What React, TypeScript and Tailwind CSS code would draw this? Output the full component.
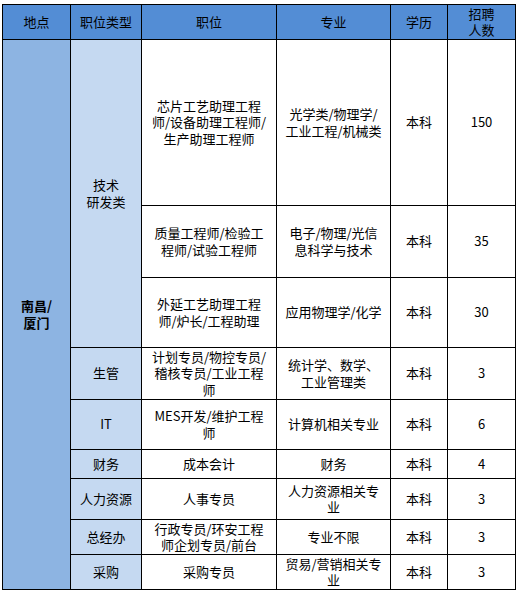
import React from 'react';

const font = { fontFamily: '"Noto Sans CJK SC", "Noto Sans", sans-serif' };

type Row = {
  title: React.ReactNode;
  major: React.ReactNode;
  degree: string;
  count: string;
  h: string;
};

const techRows: Row[] = [
  {
    title: (
      <>
        芯片工艺助理工程
        <br />
        师/设备助理工程师/
        <br />
        生产助理工程师
      </>
    ),
    major: (
      <>
        光学类/物理学/
        <br />
        工业工程/机械类
      </>
    ),
    degree: '本科',
    count: '150',
    h: 'h-[166px]',
  },
  {
    title: (
      <>
        质量工程师/检验工
        <br />
        程师/试验工程师
      </>
    ),
    major: (
      <>
        电子/物理/光信
        <br />
        息科学与技术
      </>
    ),
    degree: '本科',
    count: '35',
    h: 'h-[72px]',
  },
  {
    title: (
      <>
        外延工艺助理工程
        <br />
        师/炉长/工程助理
      </>
    ),
    major: '应用物理学/化学',
    degree: '本科',
    count: '30',
    h: 'h-[70px]',
  },
];

const otherRows: (Row & { type: string })[] = [
  {
    type: '生管',
    title: (
      <>
        计划专员/物控专员/
        <br />
        稽核专员/工业工程
        <br />
        师
      </>
    ),
    major: (
      <>
        统计学、数学、
        <br />
        工业管理类
      </>
    ),
    degree: '本科',
    count: '3',
    h: 'h-[52px]',
  },
  {
    type: 'IT',
    title: (
      <>
        MES开发/维护工程
        <br />
        师
      </>
    ),
    major: '计算机相关专业',
    degree: '本科',
    count: '6',
    h: 'h-[50px]',
  },
  { type: '财务', title: '成本会计', major: '财务', degree: '本科', count: '4', h: 'h-[29px]' },
  {
    type: '人力资源',
    title: '人事专员',
    major: (
      <>
        人力资源相关专
        <br />
        业
      </>
    ),
    degree: '本科',
    count: '3',
    h: 'h-[41px]',
  },
  {
    type: '总经办',
    title: (
      <>
        行政专员/环安工程
        <br />
        师企划专员/前台
      </>
    ),
    major: '专业不限',
    degree: '本科',
    count: '3',
    h: 'h-[35px]',
  },
  {
    type: '采购',
    title: '采购专员',
    major: (
      <>
        贸易/营销相关专
        <br />
        业
      </>
    ),
    degree: '本科',
    count: '3',
    h: 'h-[35px]',
  },
];

const cell = 'border border-black text-center align-middle p-0 leading-[16.5px]';

export default function App() {
  return (
    <div className="w-[518px] h-[593px] bg-white pt-[4px] pl-[2px]" style={font}>
      <table className="table-fixed border-collapse w-[513px] text-[13px] text-black">
        <colgroup>
          <col className="w-[68px]" />
          <col className="w-[71px]" />
          <col className="w-[135px]" />
          <col className="w-[114px]" />
          <col className="w-[57px]" />
          <col className="w-[68px]" />
        </colgroup>
        <thead>
          <tr className="h-[35px] bg-[#538dd5]">
            <th className={`${cell} font-normal`}>地点</th>
            <th className={`${cell} font-normal`}>职位类型</th>
            <th className={`${cell} font-normal`}>职位</th>
            <th className={`${cell} font-normal`}>专业</th>
            <th className={`${cell} font-normal`}>学历</th>
            <th className={`${cell} font-normal`}>
              招聘
              <br />
              人数
            </th>
          </tr>
        </thead>
        <tbody>
          {techRows.map((r, i) => (
            <tr key={i} className={r.h}>
              {i === 0 && (
                <td rowSpan={10} className={`${cell} bg-[#8db4e2] font-bold`}>
                  南昌/
                  <br />
                  厦门
                </td>
              )}
              {i === 0 && (
                <td rowSpan={3} className={`${cell} bg-[#c5d9f1]`}>
                  技术
                  <br />
                  研发类
                </td>
              )}
              <td className={cell}>{r.title}</td>
              <td className={cell}>{r.major}</td>
              <td className={cell}>{r.degree}</td>
              <td className={cell}>{r.count}</td>
            </tr>
          ))}
          {otherRows.map((r) => (
            <tr key={r.type} className={r.h}>
              <td className={`${cell} bg-[#c5d9f1]`}>{r.type}</td>
              <td className={cell}>{r.title}</td>
              <td className={cell}>{r.major}</td>
              <td className={cell}>{r.degree}</td>
              <td className={cell}>{r.count}</td>
            </tr>
          ))}
        </tbody>
      </table>
    </div>
  );
}
